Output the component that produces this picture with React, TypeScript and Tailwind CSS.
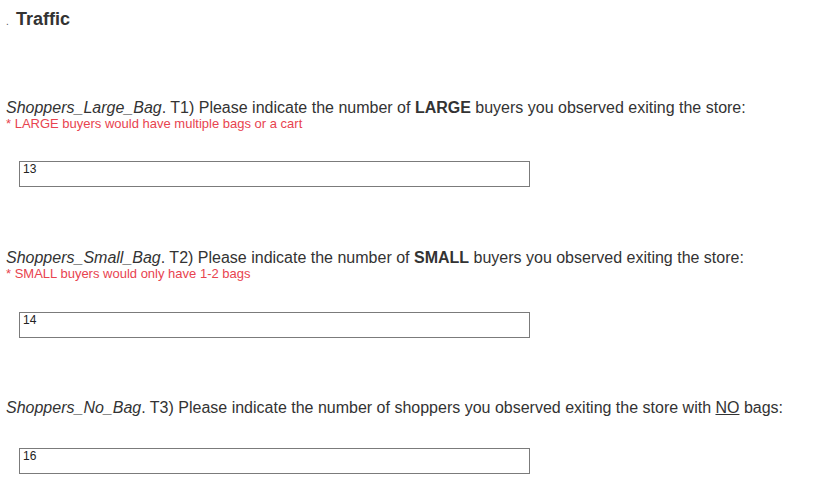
const FONT = "font-['Liberation_Sans',Arial,sans-serif]";

function Answer({ value }: { value: string }) {
  return (
    <div className="ml-[13px] h-[26px] w-[511px] border border-[#7b7b7b] bg-white px-[3px] text-[12px] leading-[14px] text-[#222]">
      {value}
    </div>
  );
}

export default function App() {
  return (
    <div className={`${FONT} min-h-[500px] w-[831px] bg-white pl-[6px] text-[#333]`}>
      <div className="mt-[9px] flex h-[21px] items-baseline">
        <span className="w-[10px] text-[10px] leading-[21px] text-[#555]">.</span>
        <h2 className="text-[18px] font-bold leading-[21px] text-[#333]">Traffic</h2>
      </div>

      <div className="mt-[69px]">
        <p className="text-[16px] leading-[17px]">
          <i>Shoppers_Large_Bag</i>. T1) Please indicate the number of <b>LARGE</b> buyers you observed exiting the store:
        </p>
        <p className="text-[13px] leading-[15px] text-[#e8434f]">* LARGE buyers would have multiple bags or a cart</p>
        <div className="mt-[30px]">
          <Answer value="13" />
        </div>
      </div>

      <div className="mt-[62px]">
        <p className="text-[16px] leading-[17px]">
          <i>Shoppers_Small_Bag</i>. T2) Please indicate the number of <b>SMALL</b> buyers you observed exiting the store:
        </p>
        <p className="text-[13px] leading-[15px] text-[#e8434f]">* SMALL buyers would only have 1-2 bags</p>
        <div className="mt-[31px]">
          <Answer value="14" />
        </div>
      </div>

      <div className="mt-[61px]">
        <p className="text-[16px] leading-[17px]">
          <i>Shoppers_No_Bag</i>. T3) Please indicate the number of shoppers you observed exiting the store with <u>NO</u> bags:
        </p>
        <div className="mt-[32px]">
          <Answer value="16" />
        </div>
      </div>
    </div>
  );
}
